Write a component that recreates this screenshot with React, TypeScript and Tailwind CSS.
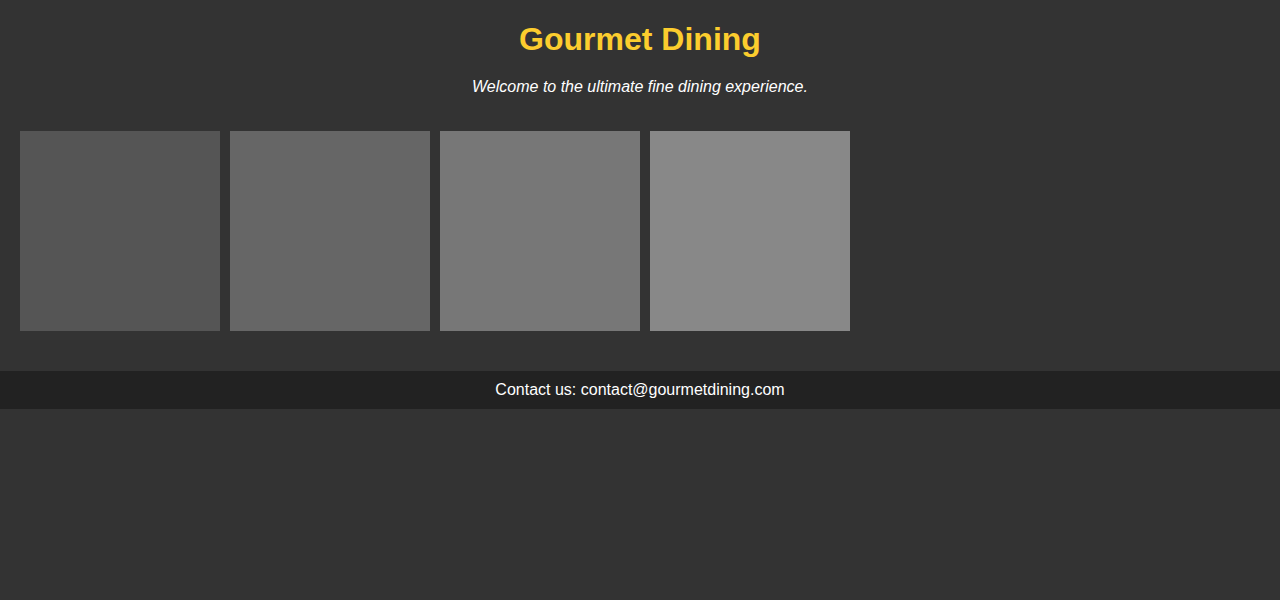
import React from "react";

const tiles = ["bg-[#555555]", "bg-[#666666]", "bg-[#777777]", "bg-[#888888]"];

export default function App() {
  return (
    <div className="min-h-[600px] bg-[#333333] font-['Liberation_Sans',Arial,sans-serif] text-white">
      <header className="flex flex-col items-center pt-[21px] pb-[15px]">
        <h1 className="text-[32px] leading-[37px] font-bold text-[#fccd2e]">Gourmet Dining</h1>
        <p className="mt-5 text-base leading-[18px] italic">
          Welcome to the ultimate fine dining experience.
        </p>
      </header>
      <main className="flex gap-2.5 p-5">
        {tiles.map((c) => (
          <div key={c} className={`size-[200px] ${c}`} />
        ))}
      </main>
      <footer className="mt-5 bg-[#222222] py-2.5 text-center text-base leading-[18px]">
        Contact us: contact@gourmetdining.com
      </footer>
    </div>
  );
}
